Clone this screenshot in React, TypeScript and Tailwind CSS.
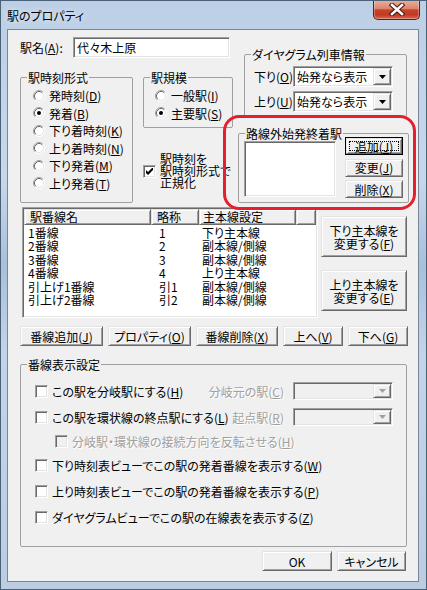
import type { ReactNode } from 'react';

// Windows クラシック風の枠
const raised =
  'border border-t-[#e3e3e3] border-l-[#e3e3e3] border-r-[#696969] border-b-[#696969] shadow-[inset_1px_1px_0_#fff,inset_-1px_-1px_0_#a0a0a0] bg-[#f0f0f0]';
const sunken =
  'border border-t-[#a0a0a0] border-l-[#a0a0a0] border-r-white border-b-white shadow-[inset_1px_1px_0_#696969,inset_-1px_-1px_0_#e3e3e3]';
const grayText = 'text-[#a0a0a0] [text-shadow:1px_1px_0_#fff]';

function U({ children }: { children: ReactNode }) {
  return <span className="underline">{children}</span>;
}

function Group({
  label,
  className = '',
  legendClass = 'leading-[15px]',
  children,
}: {
  label: string;
  className?: string;
  legendClass?: string;
  children?: ReactNode;
}) {
  return (
    <fieldset className={`border border-[#a0a0a0] rounded-[2px] min-w-0 ${className}`}>
      <legend className={`ml-[6px] px-[1px] ${legendClass}`}>{label}</legend>
      {children}
    </fieldset>
  );
}

function Radio({ on }: { on?: boolean }) {
  return (
    <svg width="12" height="12" viewBox="0 0 12 12" className="shrink-0">
      <circle cx="6" cy="6" r="5" fill="#fff" />
      <path d="M2.11 9.89 A5.5 5.5 0 0 1 9.89 2.11" stroke="#a0a0a0" fill="none" />
      <path d="M9.89 2.11 A5.5 5.5 0 0 1 2.11 9.89" stroke="#fff" fill="none" />
      <path d="M2.82 9.18 A4.5 4.5 0 0 1 9.18 2.82" stroke="#696969" fill="none" />
      <path d="M9.18 2.82 A4.5 4.5 0 0 1 2.82 9.18" stroke="#e3e3e3" fill="none" />
      {on && <circle cx="6" cy="6" r="2" fill="#000" />}
    </svg>
  );
}

function RadioItem({ on, children }: { on?: boolean; children: ReactNode }) {
  return (
    <div className="flex items-center h-[17.5px]">
      <Radio on={on} />
      <span className="ml-[4px] whitespace-nowrap">{children}</span>
    </div>
  );
}

function Check({ on, disabled }: { on?: boolean; disabled?: boolean }) {
  return (
    <div
      className={`w-[13px] h-[13px] shrink-0 flex items-center justify-center ${sunken} ${
        disabled ? 'bg-[#f0f0f0]' : 'bg-white'
      }`}
    >
      {on && (
        <svg width="7" height="7" viewBox="0 0 7 7">
          <path d="M0 2 L2 4 L7 -1 L7 2 L2 7 L0 5 Z" fill="#000" />
        </svg>
      )}
    </div>
  );
}

function Btn({
  children,
  className = '',
}: {
  children: ReactNode;
  className?: string;
}) {
  return (
    <div className={`${raised} flex items-center justify-center ${className}`}>
      <span className="text-center whitespace-nowrap">{children}</span>
    </div>
  );
}

function DefaultBtn({ children, className = '' }: { children: ReactNode; className?: string }) {
  return (
    <div className={`border border-black ${className}`}>
      <div className={`${raised} h-full p-[2px] flex`}>
        <div className="flex-1 border border-dotted border-black flex items-center justify-center">
          <span className="whitespace-nowrap">{children}</span>
        </div>
      </div>
    </div>
  );
}

function Combo({
  text,
  disabled,
  className = '',
}: {
  text?: string;
  disabled?: boolean;
  className?: string;
}) {
  return (
    <div className={`${sunken} p-[1px] flex ${disabled ? 'bg-[#f0f0f0]' : 'bg-white'} ${className}`}>
      <span className="flex-1 pl-[2px] self-center whitespace-nowrap">{text}</span>
      <div className={`${raised} w-[18px] flex items-center justify-center`}>
        <svg width="7" height="4" viewBox="0 0 7 4">
          <path d="M0 0 H7 L3.5 4 Z" fill={disabled ? '#a0a0a0' : '#000'} />
        </svg>
      </div>
    </div>
  );
}

function CloseBtn() {
  return (
    <div className="ml-auto -mr-[1px] -mt-[1px] w-[47px] h-[20px] rounded-b-[5px] border border-t-0 border-[#5b1f16] bg-[linear-gradient(180deg,#eab0a0_0%,#de846c_45%,#c7432c_52%,#c13a24_78%,#d66a4c_100%)] shadow-[inset_0_0_0_1px_rgba(255,255,255,0.3)] flex items-center justify-center">
      <svg width="16" height="13" viewBox="0 0 16 13">
        <path d="M3 2 L13 11 M13 2 L3 11" stroke="#4a1810" strokeWidth="4.6" strokeLinecap="square" />
        <path d="M3 2 L13 11 M13 2 L3 11" stroke="#fff" strokeWidth="2.6" strokeLinecap="square" />
      </svg>
    </div>
  );
}

const TRACKS = [
  ['1番線', '1', '下り主本線'],
  ['2番線', '2', '副本線/側線'],
  ['3番線', '3', '副本線/側線'],
  ['4番線', '4', '上り主本線'],
  ['引上げ1番線', '引1', '副本線/側線'],
  ['引上げ2番線', '引2', '副本線/側線'],
];

function TrackList() {
  return (
    <div className={`${sunken} bg-white p-[1px] w-[296px] h-[111px] flex flex-col`}>
      <div className="flex h-[16px] leading-[14px]">
        <div className={`${raised} w-[127px] pl-[5px]`}>駅番線名</div>
        <div className={`${raised} w-[48px] pl-[5px]`}>略称</div>
        <div className={`${raised} w-[97px] pl-[3px]`}>主本線設定</div>
        <div className={`${raised} flex-1`} />
      </div>
      <div className="pt-[1px]">
        {TRACKS.map(([name, abbr, main]) => (
          <div key={name} className="flex leading-[13.4px] whitespace-nowrap">
            <span className="w-[127px] pl-[4px]">{name}</span>
            <span className="w-[48px] pl-[8px]">{abbr}</span>
            <span className="w-[97px] pl-[3px]">{main}</span>
          </div>
        ))}
      </div>
    </div>
  );
}

function OptionRow({
  children,
  right,
  className = 'h-[26px]',
}: {
  children: ReactNode;
  right?: ReactNode;
  className?: string;
}) {
  return (
    <div className={`flex items-center ${className}`}>
      <Check />
      <span className="ml-[4px] whitespace-nowrap">{children}</span>
      {right && <div className="ml-auto flex items-center gap-[9px]">{right}</div>}
    </div>
  );
}

export default function App() {
  return (
    <div className="relative w-[427px] h-[590px] flex flex-col border border-[#4b6079] pl-[6px] pr-[7px] pb-[7px] overflow-hidden bg-[linear-gradient(180deg,#bccfe5_0%,#c8d8ea_30%,#a9c0da_45%,#c3d4e8_60%,#bccde2_100%)] font-['Noto_Sans_CJK_JP',sans-serif] text-[12px] leading-[15px] text-black [font-feature-settings:'palt']">
      {/* タイトルバー */}
      <div className="h-[28px] flex items-start shrink-0">
        <span className="mt-[7px] [text-shadow:0_0_6px_#fff]">駅のプロパティ</span>
        <CloseBtn />
      </div>

      {/* 本体 */}
      <div className="flex-1 bg-[#f0f0f0] border border-[#76879b] flex flex-col">
        {/* 上段 */}
        <div className="flex pt-[7px] pl-[12px]">
          <div className="w-[218px] flex flex-col">
            <div className="flex items-center h-[21px]">
              <span className="w-[53px] whitespace-nowrap">
                駅名(<U>A</U>):
              </span>
              <div className={`${sunken} bg-white w-[157px] h-[21px] pl-[3px] flex items-center`}>代々木上原</div>
            </div>
            <div className="flex items-start mt-[12px]">
              <Group label="駅時刻形式" className="w-[113px] h-[133px]">
                <div className="flex flex-col pt-[2px] pl-[12px]">
                  <RadioItem>
                    発時刻(<U>D</U>)
                  </RadioItem>
                  <RadioItem on>
                    発着(<U>B</U>)
                  </RadioItem>
                  <RadioItem>
                    下り着時刻(<U>K</U>)
                  </RadioItem>
                  <RadioItem>
                    上り着時刻(<U>N</U>)
                  </RadioItem>
                  <RadioItem>
                    下り発着(<U>M</U>)
                  </RadioItem>
                  <RadioItem>
                    上り発着(<U>T</U>)
                  </RadioItem>
                </div>
              </Group>
              <div className="ml-[10px] flex flex-col">
                <Group label="駅規模" className="w-[90px] h-[58px]">
                  <div className="flex flex-col pt-[2px] pl-[11px]">
                    <RadioItem>
                      一般駅(<U>I</U>)
                    </RadioItem>
                    <RadioItem on>
                      主要駅(<U>S</U>)
                    </RadioItem>
                  </div>
                </Group>
                <div className="mt-[25px] flex items-center">
                  <Check on />
                  <span className="ml-[4px] leading-[12px] whitespace-nowrap">
                    駅時刻を
                    <br />
                    駅時刻形式で
                    <br />
                    正規化
                  </span>
                </div>
              </div>
            </div>
          </div>

          <div className="flex flex-col">
            <Group label="ダイヤグラム列車情報" className="ml-[6px] mt-[10px] w-[163px] h-[70px]">
              <div className="flex flex-col gap-[4px] pt-[4px] pl-[9px]">
                <div className="flex items-center h-[21px]">
                  <span className="w-[39px] whitespace-nowrap">
                    下り(<U>O</U>)
                  </span>
                  <Combo text="始発なら表示" className="w-[100px] h-[21px]" />
                </div>
                <div className="flex items-center h-[21px]">
                  <span className="w-[39px] whitespace-nowrap">
                    上り(<U>U</U>)
                  </span>
                  <Combo text="始発なら表示" className="w-[100px] h-[21px]" />
                </div>
              </div>
            </Group>
            <Group
              label="路線外始発終着駅"
              legendClass="leading-[13px]"
              className="mt-[10px] w-[171px] h-[76px]"
            >
              <div className="flex pl-[5px]">
                <div className={`${sunken} bg-white mt-[1px] w-[92px] h-[56px]`} />
                <div className="ml-[9px] -mt-[3px] flex flex-col gap-[3.5px] w-[58px]">
                  <DefaultBtn className="h-[18px]">
                    追加(<U>J</U>)
                  </DefaultBtn>
                  <Btn className="h-[18px]">
                    変更(<U>J</U>)
                  </Btn>
                  <Btn className="h-[18px]">
                    削除(<U>X</U>)
                  </Btn>
                </div>
              </div>
            </Group>
          </div>
        </div>

        {/* 番線リスト */}
        <div className="flex pl-[14px] mt-[4px]">
          <TrackList />
          <div className="ml-[3px] flex flex-col">
            <Btn className="mt-[9px] w-[86px] h-[41px] leading-[13px]">
              下り主本線を
              <br />
              変更する(<U>F</U>)
            </Btn>
            <Btn className="mt-[13px] w-[86px] h-[41px] leading-[13px]">
              上り主本線を
              <br />
              変更する(<U>E</U>)
            </Btn>
          </div>
        </div>

        {/* 番線操作ボタン */}
        <div className="flex gap-[5px] pl-[12px] mt-[8px]">
          <Btn className="w-[83px] h-[20px]">
            番線追加(<U>J</U>)
          </Btn>
          <Btn className="w-[83px] h-[20px]">
            プロパティ(<U>O</U>)
          </Btn>
          <Btn className="w-[82px] h-[20px]">
            番線削除(<U>X</U>)
          </Btn>
          <Btn className="w-[60px] h-[20px]">
            上へ(<U>V</U>)
          </Btn>
          <Btn className="w-[60px] h-[20px]">
            下へ(<U>G</U>)
          </Btn>
        </div>

        {/* 番線表示設定 */}
        <Group label="番線表示設定" className="ml-[12px] mt-[11px] w-[387px] h-[190px]">
          <div className="flex flex-col pt-[6px] pl-[14px] pr-[13px]">
            <OptionRow
              right={
                <>
                  <span className={grayText}>
                    分岐元の駅(<U>C</U>)
                  </span>
                  <Combo disabled className="w-[100px] h-[18px]" />
                </>
              }
            >
              この駅を分岐駅にする(<U>H</U>)
            </OptionRow>
            <OptionRow
              right={
                <>
                  <span className={grayText}>
                    起点駅(<U>R</U>)
                  </span>
                  <Combo disabled className="w-[100px] h-[18px]" />
                </>
              }
            >
              この駅を環状線の終点駅にする(<U>L</U>)
            </OptionRow>
            <div className="flex items-center h-[22px] pl-[20px]">
              <Check disabled />
              <span className={`ml-[4px] whitespace-nowrap ${grayText}`}>
                分岐駅・環状線の接続方向を反転させる(<U>H</U>)
              </span>
            </div>
            <OptionRow>
              下り時刻表ビューでこの駅の発着番線を表示する(<U>W</U>)
            </OptionRow>
            <OptionRow>
              上り時刻表ビューでこの駅の発着番線を表示する(<U>P</U>)
            </OptionRow>
            <OptionRow>
              ダイヤグラムビューでこの駅の在線表を表示する(<U>Z</U>)
            </OptionRow>
          </div>
        </Group>

        {/* OK / キャンセル */}
        <div className="flex justify-end gap-[5px] pr-[12px] mt-[4px]">
          <Btn className="w-[70px] h-[20px]">OK</Btn>
          <Btn className="w-[69px] h-[20px]">キャンセル</Btn>
        </div>
      </div>

      {/* 注記の赤枠 */}
      <div className="absolute left-[222px] top-[114px] w-[193px] h-[95px] border-[3px] border-[#e5202e] rounded-[16px] pointer-events-none" />
    </div>
  );
}
